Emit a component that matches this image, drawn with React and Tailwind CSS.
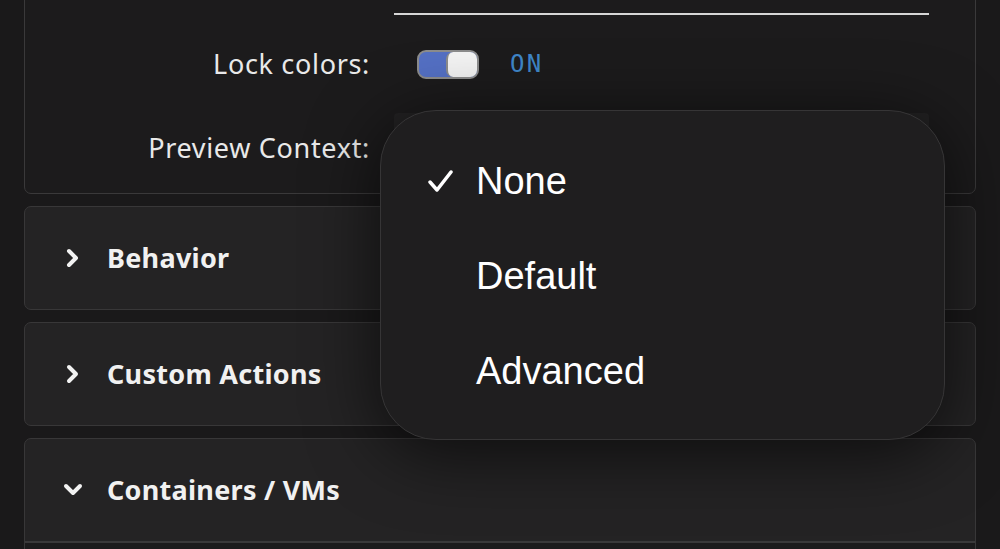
import React from 'react'

const labelFont = { fontFamily: '"Noto Sans", "Open Sans", sans-serif' }

function Chevron({ open }) {
  return (
    <svg width="20" height="20" viewBox="0 0 20 20" className="shrink-0">
      {open ? (
        <polyline points="3,6 10,13 17,6" fill="none" stroke="#f2f2f2" strokeWidth="4" strokeLinecap="round" strokeLinejoin="round" />
      ) : (
        <polyline points="6,3 13,10 6,17" fill="none" stroke="#f2f2f2" strokeWidth="4" strokeLinecap="round" strokeLinejoin="round" />
      )}
    </svg>
  )
}

function Section({ title, open, children }) {
  return (
    <div className="rounded-[7px] border border-[#383738] bg-[#242324] shrink-0">
      <div className="h-[102px] flex items-center gap-6 pl-[38px]">
        <Chevron open={open} />
        <span className="text-[27px] font-bold tracking-[0.01em] text-[#f1f1f1]" style={labelFont}>
          {title}
        </span>
      </div>
      {children}
    </div>
  )
}

function Toggle() {
  return (
    <div className="relative w-[62px] h-[29px] rounded-[9px] bg-[#5470c4] border-2 border-[#8c8c8c]">
      <div className="absolute right-0 top-0 bottom-0 w-[31px] rounded-[7px] bg-[#f3f3f3] border-l-2 border-[#8c8c8c]" />
    </div>
  )
}

function Row({ label, className, children }) {
  return (
    <div className={`grid grid-cols-[345px_535px] gap-x-6 items-center ${className}`}>
      <span className="text-right text-[27px] tracking-[0.025em] text-[#e9e9e9]" style={labelFont}>
        {label}
      </span>
      {children}
    </div>
  )
}

const options = ['None', 'Default', 'Advanced']

export default function App() {
  return (
    <div className="relative w-full h-[549px] overflow-hidden bg-[#1a191a] px-6 flex flex-col gap-3">
      {/* appearance settings (scrolled, top cut off) */}
      <div className="-mt-[21px] shrink-0 rounded-[7px] border border-[#3a393a] bg-[#1c1b1c] pb-[10px]">
        <div className="grid grid-cols-[345px_535px] gap-x-6 h-[35px]">
          <div />
          <div className="border-b-2 border-[#d6d6d6]" />
        </div>
        <Row label="Lock colors:" className="h-[98px]">
          <div className="flex items-center gap-[31px] pl-[23px]">
            <Toggle />
            <span
              className="text-[24px] tracking-[0.1em] text-[#3f86c8]"
              style={{ fontFamily: '"DejaVu Sans Mono", "Liberation Mono", monospace' }}
            >
              ON
            </span>
          </div>
        </Row>
        <Row label="Preview Context:" className="h-[70px]">
          <div className="h-[70px] rounded-[4px] bg-[#232223]" />
        </Row>
      </div>

      <Section title="Behavior" />
      <Section title="Custom Actions" />
      <Section title="Containers / VMs" open>
        <div className="border-t-2 border-[#3a393a] bg-[#1c1b1c] h-[40px]" />
      </Section>

      {/* context picker menu */}
      <div className="absolute left-[380px] top-[110px] w-[565px] h-[330px] rounded-[56px] border border-[#363536] bg-[#1f1e1f] shadow-[0_12px_70px_rgba(0,0,0,0.65)] py-[23px]">
        {options.map((opt, i) => (
          <div key={opt} className="h-[95px] flex items-center pl-[47px] gap-[23px]">
            <div className="w-[25px] flex justify-center">
              {i === 0 && (
                <svg width="25" height="23" viewBox="0 0 25 23">
                  <polyline points="2,12 9,20 23,2" fill="none" stroke="#ffffff" strokeWidth="3.5" strokeLinecap="round" strokeLinejoin="round" />
                </svg>
              )}
            </div>
            <span
              className="text-[38px] text-white"
              style={{ fontFamily: '"Liberation Sans", Arial, sans-serif' }}
            >
              {opt}
            </span>
          </div>
        ))}
      </div>
    </div>
  )
}
